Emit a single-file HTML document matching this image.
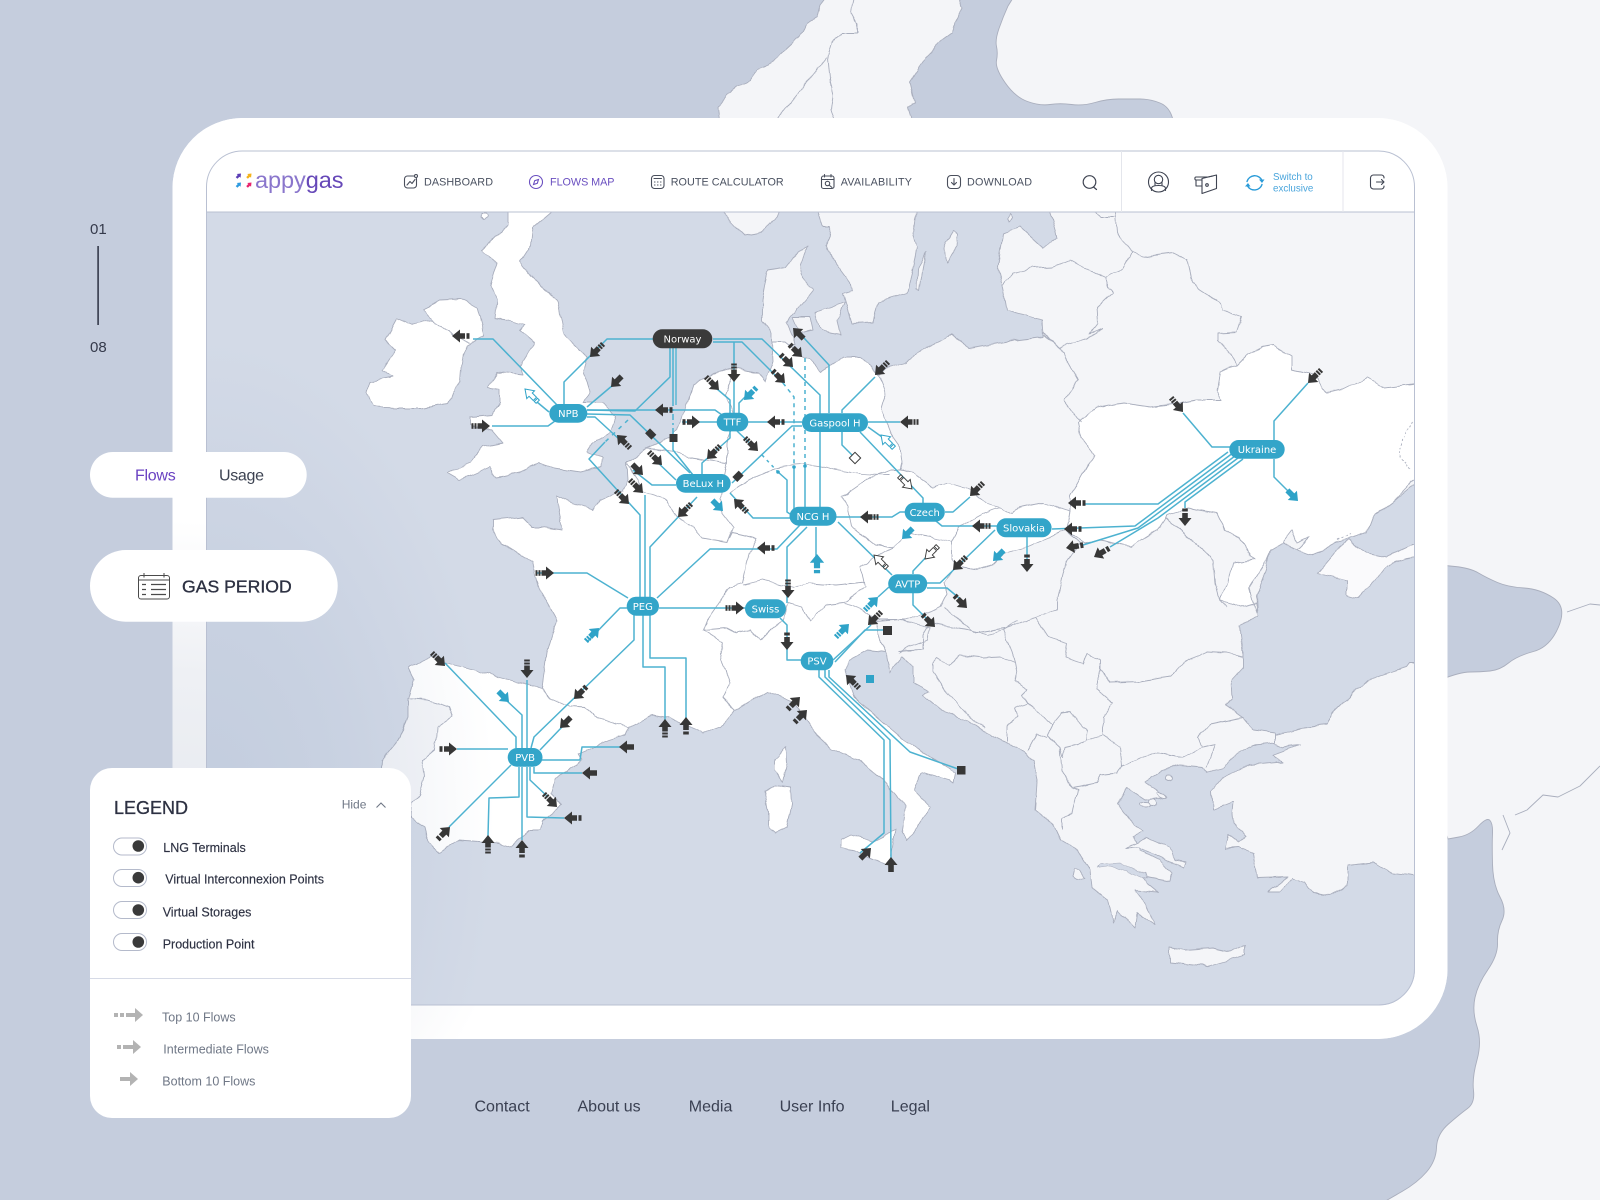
<!DOCTYPE html>
<html lang="en">
<head>
<meta charset="utf-8">
<title>Appygas Flows Map</title>
<style>
html,body{margin:0;padding:0;width:1600px;height:1200px;overflow:hidden;background:#c5cddd}
svg{display:block;font-family:"Liberation Sans",sans-serif}
.land{fill:#f4f5f8;stroke:#a9aebd;stroke-width:.9;stroke-linejoin:round}
.wh{fill:#fff;stroke:#a9aebd;stroke-width:.9;stroke-linejoin:round}
.b{fill:none;stroke:#a9aebd;stroke-width:.9;stroke-linejoin:round}
.l{fill:none;stroke:#4db2d0;stroke-width:1.5;stroke-linejoin:round}
.d{stroke-dasharray:4 4}
.hub{fill:#33a5c9}
.ht{fill:#fff;font-size:10px;text-anchor:middle;font-family:"DejaVu Sans",sans-serif}
.nav{font-size:10.8px;fill:#4a5160}
.ic{fill:none;stroke:#4a4f5c;stroke-width:1.1;stroke-linecap:round;stroke-linejoin:round}
.lg{font-size:12.5px;fill:#2d3142;stroke:#2d3142;stroke-width:.15}
.lf{font-size:12.5px;fill:#6f7786}
.ft{font-size:16px;fill:#3a4052}
</style>
</head>
<body>
<svg width="1600" height="1200" viewBox="0 0 1600 1200" xmlns="http://www.w3.org/2000/svg">
<defs>
<clipPath id="mc"><path d="M206.5,212H1414.5V969a36,36 0 0 1-36,36H206.5Z"/></clipPath>
<clipPath id="fc"><rect x="172.5" y="118" width="1275" height="921" rx="70"/></clipPath>
<filter id="wig" filterUnits="userSpaceOnUse" x="0" y="-20" width="1620" height="1240" color-interpolation-filters="sRGB">
<feTurbulence type="fractalNoise" baseFrequency=".07" numOctaves="2" seed="3" result="n"/>
<feDisplacementMap in="SourceGraphic" in2="n" scale="5" xChannelSelector="R" yChannelSelector="G"/>
<feGaussianBlur stdDeviation=".2"/>
</filter>
<radialGradient id="fg" gradientUnits="userSpaceOnUse" cx="172" cy="860" r="340">
<stop offset="0" stop-color="#e6e9ef"/><stop offset=".55" stop-color="#eef0f4"/><stop offset="1" stop-color="#fff"/>
</radialGradient>
<radialGradient id="mg" gradientUnits="userSpaceOnUse" cx="0" cy="0" r="1" gradientTransform="translate(206 820) scale(290 480)">
<stop offset="0" stop-color="#8ca0c0" stop-opacity=".23"/><stop offset=".5" stop-color="#8ca0c0" stop-opacity=".14"/><stop offset="1" stop-color="#8ca0c0" stop-opacity="0"/>
</radialGradient>
<g id="a1"><path d="M0,0L-8,-6.5V-2.8H-15V2.8H-8V6.5Z"/></g>
<g id="a2"><path d="M0,0L-8,-6.5V-2.8H-13V2.8H-8V6.5Z"/><rect x="-17.5" y="-2.8" width="3" height="5.6"/></g>
<g id="a3"><path d="M0,0L-8,-6.5V-2.8H-12.5V2.8H-8V6.5Z"/><rect x="-15.5" y="-2.8" width="2" height="5.6"/><rect x="-18.5" y="-2.8" width="2" height="5.6"/></g>
<g id="ah"><path d="M0,0L-8,-5.5V-2.3H-14V2.3H-8V5.5Z"/><rect x="-18" y="-2.3" width="2.6" height="4.6"/></g>
</defs>

<rect width="1600" height="1200" fill="#c5cddd"/>

<!-- outer land -->
<g filter="url(#wig)">
<path class="land" d="M832,-10L820,5 817,17 807,23 803,32 793,43 780,55 773,63 757,70 750,80 737,87 727,95 718,107 720,125H913L908,108 915,103 910,82 918,70 927,57 937,43 952,32 955,23 963,7 955,-10Z"/>
<path class="b" d="M855,-10L851,13 857,24 857,33 842,33 832,43 828,57 830,80 833,97 831,110 837,125M827,57L772,125"/>
</g>
<path class="land" d="M1018,-10L1008,6Q1003,17 999,28.5Q995,40 996.5,46.5Q998,53 996.5,60.5Q995,68 1005,82.5Q1015,97 1027.5,101.5Q1040,106 1050,104.5Q1060,103 1071.5,104.5Q1083,106 1095,102.5Q1107,99 1118.5,99Q1130,99 1140,99Q1150,99 1160,103Q1170,107 1173,120L1300,300 1448,839 1459,837Q1470,835 1478.5,826Q1487,817 1490,820.5Q1493,824 1492.5,834Q1492,844 1492.5,864Q1493,884 1500,897Q1507,910 1502,920.5Q1497,931 1497.5,943Q1498,955 1488,969.5Q1478,984 1475,997.5Q1472,1011 1477,1026.5Q1482,1042 1477,1060Q1472,1078 1473.5,1090.5Q1475,1103 1467.5,1108.5Q1460,1114 1448.5,1124Q1437,1134 1436.5,1147.5Q1436,1161 1426.5,1172Q1417,1183 1402,1191.5L1370,1210H1610V-10Z"/>
<path d="M1440,565L1455,566.5Q1470,568 1478.5,573Q1487,578 1497.5,582.5Q1508,587 1524,588Q1540,589 1553.5,598Q1567,607 1558.5,627Q1550,647 1533.5,651.5Q1517,656 1508.5,663Q1500,670 1490,671Q1480,672 1470,672Q1460,672 1440,680Z" fill="#c5cddd" stroke="#a9aebd" stroke-width=".9"/>
<path class="b" d="M1567,612L1590,604 1600,605M1503,815L1510,833 1502,850M1515,815L1527,810 1543,795 1558,797 1580,786 1600,766"/>

<!-- white frame -->
<rect x="172.5" y="118" width="1275" height="921" rx="70" fill="#fff"/>
<rect x="172.5" y="118" width="1275" height="921" fill="url(#fg)" clip-path="url(#fc)"/>

<!-- inner panel -->
<rect x="206.5" y="151" width="1208" height="854" rx="36" fill="#fff" stroke="#b9c0d2" stroke-width="1"/>

<g clip-path="url(#mc)">
<rect x="206" y="212" width="1210" height="794" fill="#d3dae7"/>

<g filter="url(#wig)">
<!-- eastern land -->
<path class="land" d="M1048,205L1057,237 1043,248 1020,227 1003,233 998,267 1003,287 1007,310 1042,320 1043,337 1005,342 969,348 951,335 921,350 905,363 886,368 879,375L860,500 875,620 880,640 886,652 890,673 902,657 913,667 913,683 930,692 922,695 940,710 968,720 987,733 1007,743 1033,760 1037,783 1035,810 1053,825 1060,840 1077,850 1090,870 1092,887 1108,900 1113,922 1118,910 1135,928 1137,913 1155,925 1145,903 1135,890 1158,892 1147,883 1143,877 1170,882 1172,873 1160,860 1140,850 1132,837 1143,832 1130,820 1118,803 1127,788 1145,800 1167,797 1145,782 1163,770 1180,765 1202,767 1208,772 1223,768 1237,753 1253,745 1275,743 1275,733 1253,730 1243,718 1225,705 1233,698 1232,680 1243,668 1243,653 1240,625 1258,616 1257,596 1267,567 1270,547 1282,542 1297,550 1313,555 1335,543 1367,533 1373,517 1393,502 1422,478V205Z"/>
<path d="M1097,868L1110,866 1135,874 1147,879 1145,873 1120,863 1100,864Z" fill="#d3dae7" stroke="#a9aebd" stroke-width=".6"/>

<!-- Turkey -->
<path class="land" d="M1275,735L1303,728 1327,725 1333,713 1367,680 1407,667 1410,663 1425,663V877L1393,873 1373,862 1348,865 1348,885 1330,895 1313,893 1305,882 1293,878 1280,892 1267,892 1288,877 1257,878 1253,853 1238,847 1225,848 1228,835 1237,842 1247,837 1233,823 1232,813 1233,802 1213,810 1212,790 1223,777 1250,765 1282,762 1273,755 1300,745 1283,747 1275,743Z"/>
<!-- Crimea -->
<path d="M1318,573L1340,547 1348,540 1367,553 1387,557 1412,545 1425,545V555L1407,558 1387,565 1377,578 1358,598 1347,595 1347,580Z" fill="#fafafc" stroke="#a9aebd" stroke-width=".9"/>
<!-- Greek islands -->
<path class="land" d="M1170,947L1185,950 1212,948 1230,952 1245,945 1245,955 1207,966 1170,962Z"/>
<path class="land" d="M1125,848L1147,838 1170,848 1175,860 1185,862 1183,867 1172,862 1157,855 1137,847Z"/>
<path class="land" d="M1075,868L1080,870 1085,878 1078,880 1073,877Z"/>
<circle class="land" cx="1169" cy="778" r="3"/>
<ellipse class="land" cx="1145" cy="805" rx="5" ry="2.5"/>
<ellipse class="land" cx="1152" cy="802" rx="4" ry="3"/>
<ellipse class="land" cx="1162" cy="795" rx="5" ry="2" transform="rotate(30 1162 795)"/>

<!-- Scandinavia south -->
<path class="land" d="M816,205L823,227 830,227 827,247 833,260 850,283 852,290 843,293 852,323 873,322 878,302 907,293 912,273 917,247 913,233 917,205Z"/>
<path class="land" d="M716,205L737,227 745,235 763,232 786,205Z"/>
<path class="land" d="M945,243L953,230 958,233 957,247 947,263Z"/>
<path class="land" d="M926,252L920,290 917,288 918,270Z"/>
<path class="land" d="M1010,213L1013,217 1010,222 1008,218Z"/>
<!-- Denmark -->
<path class="land" d="M807,247L793,257 785,267 768,270 765,283 762,300 762,320 772,333 772,345H795L793,337 787,323 790,317 805,300 813,290 803,277 800,265Z"/>
<path class="land" d="M815,313L845,302 837,320 840,335 830,333 820,327Z"/>
<path class="land" d="M793,317L810,317 813,330 800,333Z"/>

<!-- Western Europe -->
<path class="wh" d="M879,375L886,393 881,410 890,433 900,447 902,463 900,470 913,473 932,487 947,483 967,488 986,503 1001,507 1012,513 1020,508 1043,503 1070,512 1066,530 1051,537 1028,547 1005,553 993,565 978,570 959,567 955,567 944,583 947,593 940,607 928,613 905,620 875,620 880,640 886,652 868,650 849,660 845,670 854,697 904,740 955,773 953,783 949,780 922,772 914,790 930,807 918,827 906,840 902,833 906,807 886,783 858,760 831,748 815,733 795,703 767,691 736,710 720,727 704,733 669,718 653,715 629,727 625,735 609,740 578,753 582,760 554,780 550,793 562,805 542,820 540,830 530,830 510,847 499,843 459,840 439,852 429,843 425,827 411,817 380,790 382,760 396,743 408,717 408,700 414,680 408,667 431,657 447,663 475,670 510,680 542,688 547,653 557,620 540,590 533,563 513,550 497,540 492,530 492,520 523,517 533,527 543,527 562,530 558,507 557,495 573,503 593,510 600,500 623,490 628,480 627,463 647,448 670,438 680,422 687,403 693,385 713,373 735,368 758,373 765,382 773,362 772,342 785,342 795,350 802,357 810,360 821,372 831,365 844,357 860,357 867,363Z"/>
<!-- Sicily, Sardinia, Corsica -->
<path class="wh" d="M841,840L851,835 872,842 896,830 892,853 890,867 870,858 854,850 841,847Z"/>
<path class="wh" d="M786,746L775,760 775,770 783,782 787,763Z"/>
<path class="wh" d="M775,785L791,787 792,803 787,827 775,833 769,828 769,810 765,793Z"/>
<!-- Portugal -->
<path d="M408,698L427,700 449,707 453,717 437,728 435,750 423,760 425,777 420,795 412,803 411,817 380,790 382,760 396,743 408,717Z" fill="#f4f5f8" stroke="#a9aebd" stroke-width=".9"/>
<!-- Ukraine -->
<path class="wh" d="M1070,512L1070,497 1087,467 1095,455 1081,437 1078,423 1097,408 1123,403 1150,407 1180,403 1197,400 1222,400 1217,390 1220,372 1237,365 1247,355 1263,347 1273,345 1292,357 1292,370 1313,375 1327,393 1343,390 1367,378 1385,388 1425,383V475L1414,480 1393,502 1373,517 1367,533 1335,543 1313,555 1297,550 1310,537 1297,543 1292,530 1282,543 1270,550 1267,560 1250,587 1257,613 1257,603 1240,607 1220,600 1228,583 1233,563 1255,560 1250,557 1240,537 1225,530 1217,513 1187,508 1167,515 1157,530 1130,547 1100,540 1085,543 1066,530Z"/>
<!-- UK -->
<path class="wh" d="M560,205L533,228 531,245 520,262 530,275 545,290 557,300 563,333 577,347 587,357 583,373 590,390 583,403 603,403 615,417 610,432 593,443 587,452 603,457 602,467 580,472 555,468 540,463 520,472 497,477 490,467 460,480 448,473 470,463 483,447 503,443 492,430 470,425 470,417 493,415 500,402 500,390 488,388 497,372 523,375 520,365 535,343 520,330 525,325 507,320 495,318 497,300 490,285 497,262 482,250 497,235 508,225 508,205Z"/>
<path class="wh" d="M481,213L487,213 489,216 483,219 480,216Z"/>
<!-- Ireland -->
<path class="wh" d="M432,320L423,310 440,300 460,299 477,307 482,325 483,337 468,345 462,360 460,380 448,403 420,408 398,408 373,407 367,392 370,382 393,377 382,370 395,350 385,340 397,318 413,325Z"/>
<path class="b" d="M432,320L453,335 470,343"/>

<!-- borders -->
<path class="b" d="M542,688L550,698 570,707 586,708 597,718 629,728"/>
<path class="b" d="M627,463L643,490 667,500 677,517 693,527 703,538 727,542 732,532 757,538 748,560 743,583"/>
<path class="b" d="M647,448L668,450 688,457 703,460 727,463 727,443 731,432 734,415 725,395 735,368"/>
<path class="b" d="M727,463L720,497 722,513 733,527 727,542"/>
<path class="b" d="M743,585L763,580 793,588 810,583 836,585 865,582"/>
<path class="b" d="M865,587L861,567 875,557 894,548 907,533 932,537 951,542 951,560 959,567"/>
<path class="b" d="M842,497L871,477 892,470 900,470M842,497L848,507 852,527 875,545 894,548"/>
<path class="b" d="M951,542L959,527 990,510 1001,507"/>
<path class="b" d="M844,603L863,610 875,620M844,603L865,587M844,603L825,605 810,622 802,607 789,603 783,620 770,630 760,640 750,630 737,633 727,628 703,630 707,620 730,587 743,583"/>
<path class="b" d="M703,630L723,643 720,653 730,683 723,697 736,710"/>
<path class="b" d="M730,493C770,462 806,462 825,467 845,473 870,475 890,475"/>
<path class="b" d="M1066,530L1080,543 1066,563 1057,600 1057,610 1035,617 1005,628 974,633 944,607"/>
<path class="b" d="M1100,540L1085,543"/>
<path class="b" d="M875,622L900,620 930,628 928,640 909,647 900,653"/>
<path class="b" d="M900,651L923,650 923,635 930,623 967,630 987,635 1003,630 1017,620"/>
<path class="b" d="M1003,630L1012,652 1015,662"/>
<path class="b" d="M933,663L937,658 948,665 960,655 983,658 1000,657 1015,662 1017,673 1015,682 1028,690 1023,695 1028,703 1015,708 1018,717 1007,727 1007,743"/>
<path class="b" d="M933,663V672L945,690 970,717 985,728"/>
<path class="b" d="M1028,703L1042,717 1052,725 1062,713 1070,712 1083,727 1088,730 1087,740 1103,735"/>
<path class="b" d="M1052,725L1047,735 1060,747 1063,757 1065,748 1078,745 1087,740"/>
<path class="b" d="M1027,752L1037,733 1047,737M1060,747L1062,770 1072,788 1078,790 1072,813 1063,820 1063,830"/>
<path class="b" d="M1072,788L1097,783 1100,775 1117,773 1122,765"/>
<path class="b" d="M1103,735L1120,747 1122,765 1157,752 1170,755 1183,757 1202,748 1198,737 1210,725 1243,718"/>
<path class="b" d="M1202,748L1215,745 1207,767"/>
<path class="b" d="M1103,735L1103,717 1113,703 1097,690 1097,677 1100,670 1110,683 1140,682 1170,677 1183,663 1207,652 1227,653 1243,657"/>
<path class="b" d="M1100,670V660L1087,653 1083,663 1065,657 1067,643 1048,637 1035,617"/>
<path class="b" d="M1165,517L1183,533 1200,547 1213,560 1215,583 1218,597 1227,607"/>
<path class="b" d="M1003,285L1013,273 1033,268 1053,267 1070,260 1083,267 1107,278 1123,268 1132,253"/>
<path class="b" d="M1132,253L1117,233 1115,205M1090,205L1100,217 1115,217"/>
<path class="b" d="M1132,253L1143,257 1157,255 1173,253 1187,260 1192,283 1200,290 1220,303 1222,310 1242,317 1237,332 1218,333 1218,340 1230,353 1237,365"/>
<path class="b" d="M1107,278V287L1113,292 1097,307 1098,323 1090,333 1103,328 1087,338 1060,347 1043,335"/>
<path class="b" d="M1043,333L1060,348 1078,380 1064,400 1081,423"/>
<path class="b" d="M1412,422L1402,440 1400,457 1410,470" stroke-dasharray="2 2"/>
<path class="b" d="M1338,540L1350,534" stroke-dasharray="2 2"/>
</g>

<!-- gradient tint -->
<rect x="206" y="212" width="420" height="794" fill="url(#mg)"/>

<!-- network lines -->
<g class="l">
<path d="M473,339H493L557,405"/>
<path d="M564,405V382L607,339H653"/>
<path d="M587,407L613,385"/>
<path d="M492,426H548L555,421"/>
<path d="M549,412L537,402"/>
<path d="M587,410L635,411 670,377V348"/>
<path d="M673,348V400M673,442V450L693,475"/>
<path d="M676,348V405" opacity=".9"/>
<path d="M587,410H715L722,415"/>
<path d="M587,414L630,415 690,473"/>
<path d="M587,417H595L620,440"/>
<path d="M605,442L589,459 640,515V600"/>
<path d="M645,495V597"/>
<path d="M633,470L652,485H676"/>
<path d="M653,458L676,480"/>
<path d="M650,598V547L697,497"/>
<path d="M657,598L710,549H777L800,525"/>
<path d="M628,598L587,573H537"/>
<path d="M627,608H620L587,642"/>
<path d="M659,608H745"/>
<path d="M634,615V640L534,737 531,748"/>
<path d="M643,615V667H665V720"/>
<path d="M650,615V658H686V720"/>
<path d="M780,618L787,625V660H801"/>
<path d="M807,527L787,547V603"/>
<path d="M816,527V557"/>
<path d="M713,342H742L783,383"/>
<path d="M713,339H762L820,395V507"/>
<path d="M734,342V413"/>
<path d="M739,413V403L752,390"/>
<path d="M730,413V400L710,383"/>
<path d="M682,422H717"/>
<path d="M730,431V438L702,463V475"/>
<path d="M737,431L757,450"/>
<path d="M748,422H802"/>
<path d="M802,426H792L732,483"/>
<path d="M794,467V512M805,466V512"/>
<path d="M778,472L787,480V512L790,514"/>
<path d="M730,493L753,518H790"/>
<path d="M836,517H892L900,512H905"/>
<path d="M838,522L892,575"/>
<path d="M829,413V365L804,338"/>
<path d="M842,413V410L875,377"/>
<path d="M868,422H900"/>
<path d="M868,427L882,437"/>
<path d="M842,432V445L855,458"/>
<path d="M860,432L923,498V503"/>
<path d="M945,512H953L970,497"/>
<path d="M936,521L942,526H997"/>
<path d="M995,530L940,583H927"/>
<path d="M927,588H947L959,598"/>
<path d="M913,593V605L928,620"/>
<path d="M913,574V571L930,553"/>
<path d="M889,587L878,597"/>
<path d="M1027,537V560"/>
<path d="M1228,452L1158,504H1085"/>
<path d="M1231.5,454L1135,526 1052,529"/>
<path d="M1235,456L1138,528 1083,545"/>
<path d="M1238,458L1158,518 1110,547"/>
<path d="M1243,459L1185,502V508"/>
<path d="M1183,413L1212,447H1230"/>
<path d="M1274,440V421L1308,383"/>
<path d="M1274,459V477L1290,493"/>
<path d="M833,660L871,625"/>
<path d="M835,662L865,630H886"/>
<path d="M819,670V677L884,740V833L860,853"/>
<path d="M825,670V677L890,740 891,858"/>
<path d="M829,670V677L910,752 961,770"/>
<path d="M516,748V737L445,663"/>
<path d="M522,748V715L506,700"/>
<path d="M527,748V680"/>
<path d="M540,750L562,727"/>
<path d="M542,760H580L582,747H621"/>
<path d="M534,767V773H582"/>
<path d="M530,767V780L548,797"/>
<path d="M527,767V817L564,818"/>
<path d="M522,767V840"/>
<path d="M519,767V797L489,798 488,836"/>
<path d="M511,765L449,827"/>
<path d="M508,749H457"/>
<path class="d" d="M628,420L605,442" style="stroke-dasharray:4 5"/>
<path class="d" d="M783,383L794,397V467M805,358V466"/>
<path class="d" d="M762,455L778,472" style="stroke-dasharray:3 4"/>
<path class="d" d="M673,400V438" style="stroke-dasharray:6 3 2 3"/>
</g>
<g fill="#33a5c9"><circle cx="794" cy="467" r="1.8"/><circle cx="805" cy="466" r="1.8"/><circle cx="778" cy="472" r="1.8"/></g>

<!-- dark arrows -->
<g fill="#373737">
<use href="#a2" transform="translate(452 336) rotate(180)"/>
<use href="#a3" transform="translate(590 357) rotate(135)"/>
<use href="#a1" transform="translate(611 387) rotate(135)"/>
<use href="#a3" transform="translate(490 426)"/>
<use href="#a2" transform="translate(655 410) rotate(180)"/>
<use href="#a3" transform="translate(719 390) rotate(45)"/>
<use href="#a3" transform="translate(734 382) rotate(90)"/>
<use href="#a2" transform="translate(785 383) rotate(45)"/>
<use href="#a2" transform="translate(793 367) rotate(45)"/>
<use href="#a2" transform="translate(802 357) rotate(45)"/>
<use href="#a1" transform="translate(793 328) rotate(-135)"/>
<use href="#a2" transform="translate(700 422)"/>
<use href="#a2" transform="translate(767 422) rotate(180)"/>
<use href="#a3" transform="translate(617 435) rotate(-135)"/>
<use href="#a3" transform="translate(758 451) rotate(45)"/>
<use href="#a3" transform="translate(707 459) rotate(135)"/>
<use href="#a3" transform="translate(662 465) rotate(45)"/>
<use href="#a1" transform="translate(643 475) rotate(45)"/>
<use href="#a3" transform="translate(643 493) rotate(45)"/>
<use href="#a3" transform="translate(629 504) rotate(45)"/>
<use href="#a3" transform="translate(678 517) rotate(135)"/>
<use href="#a3" transform="translate(734 499) rotate(-135)"/>
<use href="#a2" transform="translate(757 548) rotate(180)"/>
<use href="#a3" transform="translate(788 598) rotate(90)"/>
<use href="#a3" transform="translate(744 608)"/>
<use href="#a2" transform="translate(787 650) rotate(90)"/>
<use href="#a3" transform="translate(554 573)"/>
<use href="#a3" transform="translate(445 666) rotate(45)"/>
<use href="#a3" transform="translate(527 678) rotate(90)"/>
<use href="#a2" transform="translate(574 699) rotate(135)"/>
<use href="#a3" transform="translate(900 422) rotate(180)"/>
<use href="#a3" transform="translate(875 375) rotate(135)"/>
<use href="#a3" transform="translate(1183 412) rotate(50)"/>
<use href="#a3" transform="translate(1308 383) rotate(135)"/>
<use href="#a2" transform="translate(1185 526) rotate(90)"/>
<use href="#a2" transform="translate(1068 503) rotate(180)"/>
<use href="#a2" transform="translate(1064 529) rotate(180)"/>
<use href="#a2" transform="translate(1066 548) rotate(170)"/>
<use href="#a2" transform="translate(1094 557) rotate(150)"/>
<use href="#a3" transform="translate(972 526) rotate(180)"/>
<use href="#a3" transform="translate(860 517) rotate(180)"/>
<use href="#a3" transform="translate(970 496) rotate(135)"/>
<use href="#a2" transform="translate(1027 572) rotate(90)"/>
<use href="#a3" transform="translate(953 570) rotate(135)"/>
<use href="#a2" transform="translate(967 608) rotate(45)"/>
<use href="#a2" transform="translate(935 627) rotate(45)"/>
<use href="#a3" transform="translate(868 625) rotate(135)"/>
<use href="#a3" transform="translate(846 675) rotate(-135)"/>
<use href="#a2" transform="translate(457 749)"/>
<use href="#a1" transform="translate(560 728) rotate(135)"/>
<use href="#a1" transform="translate(619 747) rotate(180)"/>
<use href="#a1" transform="translate(582 773) rotate(180)"/>
<use href="#a3" transform="translate(557 807) rotate(45)"/>
<use href="#a2" transform="translate(564 818) rotate(180)"/>
<use href="#a2" transform="translate(450 827) rotate(-45)"/>
<use href="#a3" transform="translate(488 835) rotate(-90)"/>
<use href="#a2" transform="translate(522 840) rotate(-90)"/>
<use href="#a3" transform="translate(665 719) rotate(-90)"/>
<use href="#a2" transform="translate(686 717) rotate(-90)"/>
<use href="#a2" transform="translate(800 697) rotate(-45)"/>
<use href="#a2" transform="translate(807 710) rotate(-45)"/>
<use href="#a1" transform="translate(871 848) rotate(-45)"/>
<use href="#a1" transform="translate(891 857) rotate(-90)"/>
<rect x="883" y="626" width="9" height="9"/>
<rect x="957" y="766" width="8.5" height="8.5"/>
<rect x="669.5" y="434" width="8" height="8"/>
<rect x="646" y="430" width="9" height="7" transform="rotate(45 650 434)"/>
<rect x="734" y="473" width="9" height="7" transform="rotate(-45 738 477)"/>
</g>

<!-- blue arrows -->
<g fill="#2fa3c8">
<use href="#a2" transform="translate(744 400) rotate(135)"/>
<use href="#a1" transform="translate(723 511) rotate(45)"/>
<use href="#a2" transform="translate(817 554) rotate(-90) scale(1.1)"/>
<use href="#a3" transform="translate(599 628) rotate(-45)"/>
<use href="#a3" transform="translate(849 624) rotate(-45)"/>
<use href="#a1" transform="translate(1298 501) rotate(45)"/>
<use href="#a1" transform="translate(902 539) rotate(135)"/>
<use href="#a1" transform="translate(993 561) rotate(135)"/>
<use href="#a3" transform="translate(878 597) rotate(-45)"/>
<use href="#a1" transform="translate(509 702) rotate(45)"/>
<rect x="866" y="675" width="8" height="8"/>
</g>

<!-- hollow arrows -->
<g fill="#fff" stroke="#2fa3c8" stroke-width="1">
<use href="#ah" transform="translate(525 389) rotate(-135)"/>
<use href="#ah" transform="translate(881 435) rotate(-135)"/>
</g>
<g fill="#fff" stroke="#373737" stroke-width=".9">
<use href="#ah" transform="translate(925 559) rotate(135)"/>
<use href="#ah" transform="translate(874 555) rotate(-135)"/>
<use href="#ah" transform="translate(912 489) rotate(45)"/>
</g>
<rect x="851" y="454" width="8" height="8" fill="#fff" stroke="#373737" transform="rotate(45 855 458)"/>

<!-- hubs -->
<rect x="652.7" y="329.3" width="59.6" height="19" rx="9.5" fill="#3a3a3a"/><text class="ht" x="682.5" y="342.4">Norway</text>
<rect class="hub" x="549.3" y="404" width="38" height="18.7" rx="9.3"/><text class="ht" x="568.3" y="417">NPB</text>
<rect class="hub" x="716.7" y="412.7" width="31.6" height="18.7" rx="9.3"/><text class="ht" x="732.5" y="425.7">TTF</text>
<rect class="hub" x="802" y="413.3" width="66" height="18.7" rx="9.3"/><text class="ht" x="835" y="426.3">Gaspool H</text>
<rect class="hub" x="676" y="474" width="54.7" height="18.7" rx="9.3"/><text class="ht" x="703.3" y="487">BeLux H</text>
<rect class="hub" x="789.5" y="506.7" width="47" height="19" rx="9.5"/><text class="ht" x="813" y="519.9">NCG H</text>
<rect class="hub" x="904.7" y="502.7" width="40.1" height="19" rx="9.5"/><text class="ht" x="924.7" y="515.9">Czech</text>
<rect class="hub" x="996.5" y="518.3" width="55.1" height="19" rx="9.5"/><text class="ht" x="1024" y="531.5">Slovakia</text>
<rect class="hub" x="1229.3" y="440" width="55.4" height="18.7" rx="9.3"/><text class="ht" x="1257" y="453">Ukraine</text>
<rect class="hub" x="888.2" y="574.3" width="39" height="19" rx="9.5"/><text class="ht" x="907.7" y="587.5">AVTP</text>
<rect class="hub" x="626.7" y="596.7" width="32.3" height="19" rx="9.5"/><text class="ht" x="642.8" y="609.9">PEG</text>
<rect class="hub" x="745" y="599.3" width="41" height="19" rx="9.5"/><text class="ht" x="765.5" y="612.5">Swiss</text>
<rect class="hub" x="800.7" y="651.7" width="32.6" height="18.5" rx="9.2"/><text class="ht" x="817" y="664.6">PSV</text>
<rect class="hub" x="507.7" y="748" width="34.8" height="18.7" rx="9.3"/><text class="ht" x="525.1" y="761">PVB</text>
</g>

<!-- panel outline on map -->
<path d="M206.5,212H1414.5V969a36,36 0 0 1-36,36H206.5Z" fill="none" stroke="#b9c0d2" stroke-width="1"/>

<!-- header separators -->
<path d="M1121.5,151V212M1343,151V212" stroke="#e4e6ec" stroke-width="1"/>

<!-- logo -->
<use href="#a1" fill="#5b3db5" transform="translate(241 173.5) rotate(-45) scale(.42)"/>
<use href="#a1" fill="#f5b21a" transform="translate(251.5 173.5) rotate(-45) scale(.42)"/>
<use href="#a1" fill="#2f9be0" transform="translate(241 182.5) rotate(-45) scale(.42)"/>
<use href="#a1" fill="#e8256e" transform="translate(251.5 182.5) rotate(-45) scale(.42)"/>
<text x="255" y="188" font-size="23.5" fill="#8a76cc" textLength="88.5">appy<tspan fill="#6648b8">gas</tspan></text>

<!-- nav -->
<g class="ic">
<rect x="404.5" y="176" width="12" height="12" rx="3"/>
<path d="M407,185L410,181.5 412,183.5 415,179.5"/>
<circle cx="416" cy="176" r="1.5" fill="#fff"/>
</g>
<text class="nav" x="424" y="185.5" textLength="69">DASHBOARD</text>
<g fill="none" stroke="#6a4fc0" stroke-width="1.1">
<circle cx="536" cy="182" r="6.5"/>
<path d="M533.5,184.5L534.7,180.7 538.5,179.5 537.3,183.3Z"/>
</g>
<text class="nav" x="550" y="185.5" textLength="64.5" style="fill:#6a4fc0">FLOWS MAP</text>
<g class="ic">
<rect x="651.5" y="175.5" width="12.5" height="13" rx="3"/>
<path d="M654,178.5H661.5M654.5,182H655M657.5,182H658M660.5,182H661M654.5,185H655M657.5,185H658M660.5,185H661"/>
</g>
<text class="nav" x="670.7" y="185.5" textLength="113">ROUTE CALCULATOR</text>
<g class="ic">
<rect x="821.5" y="176" width="12.5" height="12.5" rx="2"/>
<path d="M821.5,179.5H834M824.5,174.5V177M831,174.5V177"/>
<circle cx="827.5" cy="183.5" r="2.2"/>
<path d="M829,185L832,187.5"/>
</g>
<text class="nav" x="840.7" y="185.5" textLength="71.3">AVAILABILITY</text>
<g class="ic">
<rect x="947.5" y="175.5" width="13" height="13" rx="3.5"/>
<path d="M954,178.5V184.5M951.5,182.5L954,185 956.5,182.5"/>
</g>
<text class="nav" x="967" y="185.5" textLength="65">DOWNLOAD</text>
<g fill="none" stroke="#3f4452" stroke-width="1.2" stroke-linecap="round">
<circle cx="1089.5" cy="182" r="6.3"/>
<path d="M1093.5,187L1096.5,189.5"/>
</g>
<g class="ic" style="stroke:#3f4452">
<circle cx="1158.5" cy="182" r="10"/>
<circle cx="1158.5" cy="179.5" r="4.2"/>
<path d="M1155,182.5V185M1162,182.5V185M1151.5,190.5V188.5C1151.5,186 1155,185.5 1158.5,185.5 1162,185.5 1165.5,186 1165.5,188.5V190.5"/>
</g>
<g class="ic" style="stroke:#3f4452">
<path d="M1202,178.5L1216.5,175V188.5L1202,193.5Z"/>
<path d="M1202,180H1196C1194.5,180 1194.5,177 1196,177H1208L1213,176"/>
<path d="M1196,180V186H1202"/>
<circle cx="1207" cy="185" r="1.3"/>
</g>
<g fill="none" stroke="#2a9bd8" stroke-width="1.4" stroke-linecap="round">
<path d="M1247,181.5A8,8 0 0 1 1262,180.5"/>
<path d="M1262,184.5A8,8 0 0 1 1247.5,186"/>
</g>
<path d="M1259,179.5L1264.5,179.5 1262,183Z" fill="#2a9bd8"/>
<path d="M1245,186.5L1250.5,186.5 1248,183Z" fill="#2a9bd8"/>
<text x="1273" y="180" font-size="9.8" fill="#4aa5dc">Switch to</text>
<text x="1273" y="191.5" font-size="9.8" fill="#4aa5dc">exclusive</text>
<g class="ic" style="stroke:#3f4452">
<path d="M1384,178V177.5A2.5,2.5 0 0 0 1381.5,175H1373.5A3,3 0 0 0 1370.5,178V186A3,3 0 0 0 1373.5,189H1381.5A2.5,2.5 0 0 0 1384,186.5V186"/>
<path d="M1376.5,182H1384M1381.5,179.5L1384,182 1381.5,184.5"/>
</g>

<!-- side numbers -->
<text x="90" y="234" font-size="15" fill="#353a4b">01</text>
<rect x="97.3" y="246" width="1.6" height="79" fill="#353a4b"/>
<text x="90" y="352" font-size="15" fill="#353a4b">08</text>

<!-- pills -->
<rect x="90" y="452" width="216.7" height="45.7" rx="22.8" fill="#fff"/>
<text x="135" y="480.5" font-size="16" fill="#6a42c2" textLength="40.7">Flows</text>
<text x="219" y="480.5" font-size="16" fill="#3d4352" textLength="45">Usage</text>

<rect x="90" y="550" width="247.7" height="71.7" rx="35.8" fill="#fff"/>
<g fill="none" stroke="#4a4a4a" stroke-width="1">
<rect x="138.5" y="575.5" width="31" height="23.5" rx="2.5"/>
<path d="M138.5,580H169.5M144,573V577.5M164,573V577.5"/>
<path d="M142,584.5H146M142,589.5H146M142,594.5H146M151,584.5H166M151,589.5H166M151,594.5H166" stroke-width="1.2"/>
</g>
<text x="182" y="592.6" font-size="17.5" fill="#2d3142" stroke="#2d3142" stroke-width=".35" textLength="109.7" lengthAdjust="spacingAndGlyphs">GAS PERIOD</text>

<!-- legend -->
<rect x="90" y="768" width="321" height="350" rx="22" fill="#fff"/>
<text x="114" y="814" font-size="18" fill="#2d3142" stroke="#2d3142" stroke-width=".3">LEGEND</text>
<text x="341.7" y="808.3" font-size="12" fill="#6f7786">Hide</text>
<path d="M376.5,807.5L381,803 385.5,807.5" fill="none" stroke="#6f7786" stroke-width="1.1"/>

<g fill="#fff" stroke="#b4bacb" stroke-width="1">
<rect x="113.5" y="838" width="33" height="17" rx="8.5"/>
<rect x="113.5" y="869.5" width="33" height="17" rx="8.5"/>
<rect x="113.5" y="901.5" width="33" height="17" rx="8.5"/>
<rect x="113.5" y="933.5" width="33" height="17" rx="8.5"/>
</g>
<g fill="#3a3a3a">
<circle cx="138.3" cy="846" r="5.8"/>
<circle cx="138.3" cy="877.7" r="5.8"/>
<circle cx="138.3" cy="910" r="5.8"/>
<circle cx="138.3" cy="942" r="5.8"/>
</g>
<text class="lg" x="163.3" y="852">LNG Terminals</text>
<text class="lg" x="165.3" y="883.3" textLength="158.7">Virtual Interconnexion Points</text>
<text class="lg" x="162.7" y="916.3">Virtual Storages</text>
<text class="lg" x="162.7" y="948.3">Production Point</text>
<path d="M90,978.5H411" stroke="#d6dae6" stroke-width="1"/>

<g fill="#b3b3b3">
<rect x="114" y="1013" width="4" height="4"/><rect x="120" y="1013" width="4" height="4"/><rect x="126" y="1013" width="10" height="4"/>
<path d="M135,1008L143,1015 135,1022Z"/>
<rect x="117" y="1045" width="4" height="4"/><rect x="123" y="1045" width="11" height="4"/>
<path d="M133,1040L141,1047 133,1054Z"/>
<rect x="120" y="1077" width="11" height="4"/>
<path d="M130,1072L138,1079 130,1086Z"/>
</g>
<text class="lf" x="162" y="1021.3">Top 10 Flows</text>
<text class="lf" x="163.3" y="1053.3">Intermediate Flows</text>
<text class="lf" x="162.3" y="1085.3">Bottom 10 Flows</text>

<!-- footer -->
<text class="ft" x="474.5" y="1111.5">Contact</text>
<text class="ft" x="577.5" y="1111.5">About us</text>
<text class="ft" x="688.8" y="1111.5">Media</text>
<text class="ft" x="779.6" y="1111.5">User Info</text>
<text class="ft" x="890.8" y="1111.5">Legal</text>
</svg>
</body>
</html>
